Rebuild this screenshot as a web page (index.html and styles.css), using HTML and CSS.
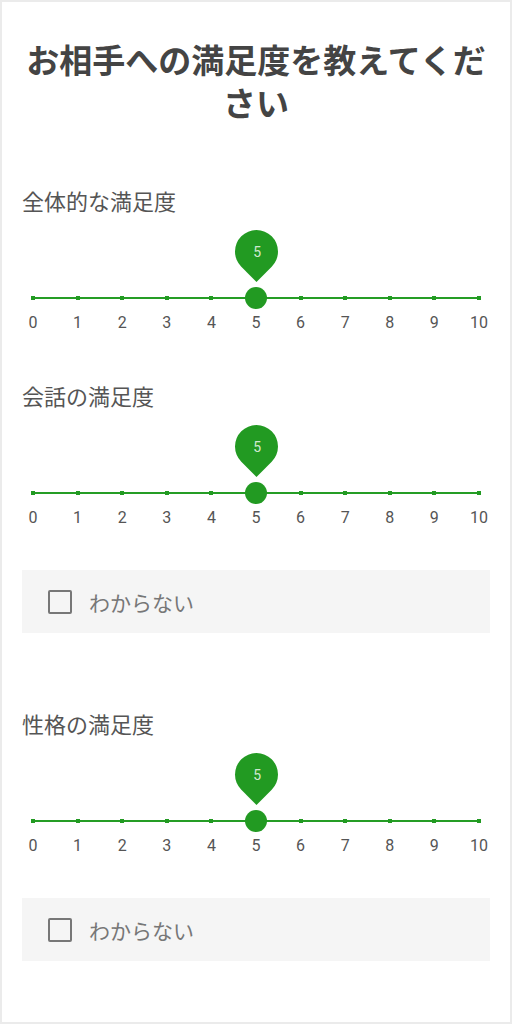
FILE: index.html
```html
<!DOCTYPE html>
<html lang="ja">
<head>
<meta charset="utf-8">
<meta name="viewport" content="width=device-width, initial-scale=1">
<title>満足度</title>
<link rel="stylesheet" href="styles.css">
</head>
<body>
<div class="page">
  <h1 class="title">お相手への満足度を教えてください</h1>

  <div class="question">
    <div class="q-label">全体的な満足度</div>
    <div class="slider">
      <div class="rail"></div>
      <div class="ticks"><i></i><i></i><i></i><i></i><i></i><i></i><i></i><i></i><i></i><i></i><i></i></div>
      <div class="thumb" style="left: 50%"><span class="pin"><b>5</b></span></div>
    </div>
    <div class="scale"><span>0</span><span>1</span><span>2</span><span>3</span><span>4</span><span>5</span><span>6</span><span>7</span><span>8</span><span>9</span><span>10</span></div>
  </div>

  <div class="question">
    <div class="q-label">会話の満足度</div>
    <div class="slider">
      <div class="rail"></div>
      <div class="ticks"><i></i><i></i><i></i><i></i><i></i><i></i><i></i><i></i><i></i><i></i><i></i></div>
      <div class="thumb" style="left: 50%"><span class="pin"><b>5</b></span></div>
    </div>
    <div class="scale"><span>0</span><span>1</span><span>2</span><span>3</span><span>4</span><span>5</span><span>6</span><span>7</span><span>8</span><span>9</span><span>10</span></div>
    <label class="unknown"><span class="box"></span>わからない</label>
  </div>

  <div class="question">
    <div class="q-label">性格の満足度</div>
    <div class="slider">
      <div class="rail"></div>
      <div class="ticks"><i></i><i></i><i></i><i></i><i></i><i></i><i></i><i></i><i></i><i></i><i></i></div>
      <div class="thumb" style="left: 50%"><span class="pin"><b>5</b></span></div>
    </div>
    <div class="scale"><span>0</span><span>1</span><span>2</span><span>3</span><span>4</span><span>5</span><span>6</span><span>7</span><span>8</span><span>9</span><span>10</span></div>
    <label class="unknown"><span class="box"></span>わからない</label>
  </div>
</div>
</body>
</html>
```
FILE: styles.css
```css
body {
  margin: 0;
  background: #fff;
  font-family: "Noto Sans CJK JP", "Noto Sans", sans-serif;
}

.page {
  box-sizing: border-box;
  display: flex;
  flex-direction: column;
  width: 512px;
  height: 1024px;
  border: 2px solid #ebebeb;
  padding: 0 20px;
  overflow: hidden;
}

.title {
  margin: 36px 0 0 0;
  font-size: 33px;
  line-height: 43px;
  font-weight: bold;
  color: #444;
  text-align: center;
}

.question {
  display: flex;
  flex-direction: column;
  margin-top: 62px;
}
.question + .question {
  margin-top: 48px;
}

.q-label {
  font-size: 22px;
  line-height: 28px;
  color: #555;
}

/* slider */
.slider {
  position: relative;
  height: 99px;
  margin: 0 11px;
}
.rail {
  position: absolute;
  left: 0;
  right: 0;
  top: 83px;
  height: 2px;
  background: #259d25;
}
.ticks {
  position: absolute;
  left: -2px;
  right: -2px;
  top: 82px;
  display: flex;
  justify-content: space-between;
}
.ticks i {
  width: 4px;
  height: 4px;
  background: #229a22;
}
.thumb {
  position: absolute;
  top: 73px;
  width: 22px;
  height: 22px;
  margin-left: -11px;
  border-radius: 50%;
  background: #229a22;
}
.pin {
  position: absolute;
  left: -10.5px;
  top: -57px;
  width: 43px;
  height: 43px;
  border-radius: 50% 50% 50% 0;
  background: #229a22;
  transform: rotate(-45deg);
  display: flex;
  align-items: center;
  justify-content: center;
}
.pin b {
  transform: rotate(45deg);
  font-family: Roboto, sans-serif;
  font-weight: normal;
  font-size: 14px;
  color: rgba(255, 255, 255, 0.8);
}

.scale {
  display: flex;
  justify-content: space-between;
  margin: 0 -1px;
  font-family: Roboto, sans-serif;
  font-size: 16px;
  line-height: 20px;
  color: #555;
}
.scale span {
  width: 24px;
  text-align: center;
}

/* unknown checkbox */
.unknown {
  display: flex;
  align-items: center;
  gap: 17px;
  height: 63px;
  margin: 42px 0 28px 0;
  padding-left: 26px;
  background: #f5f5f5;
  font-size: 21px;
  color: #777;
}
.box {
  box-sizing: border-box;
  width: 24px;
  height: 24px;
  border: 2.5px solid #777;
  border-radius: 2px;
}
```
